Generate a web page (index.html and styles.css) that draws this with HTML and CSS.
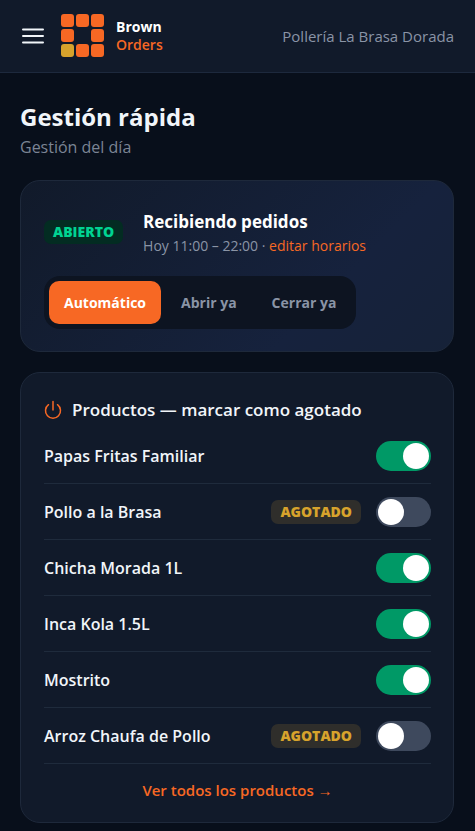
FILE: index.html
```html
<!DOCTYPE html>
<html lang="es">
<head>
<meta charset="utf-8">
<meta name="viewport" content="width=device-width, initial-scale=1">
<title>Gestión rápida</title>
<link rel="stylesheet" href="styles.css">
</head>
<body>
<header class="topbar">
  <button class="menu" type="button" aria-label="Menú">
    <svg width="22" height="16" viewBox="0 0 22 16" fill="none" stroke="currentColor" stroke-width="2" stroke-linecap="round"><path d="M1 1.5h20M1 8h20M1 14.5h20"/></svg>
  </button>
  <a class="brand" href="#">
    <svg width="43" height="43" viewBox="0 0 43 43" fill="#f76824" aria-hidden="true">
      <rect width="13" height="13" rx="3"/><rect x="15" width="13" height="13" rx="3"/><rect x="30" width="13" height="13" rx="3"/>
      <rect y="15" width="13" height="13" rx="3"/><rect x="30" y="15" width="13" height="13" rx="3"/>
      <rect y="30" width="13" height="13" rx="3" fill="#d7a32c"/><rect x="15" y="30" width="13" height="13" rx="3"/><rect x="30" y="30" width="13" height="13" rx="3"/>
    </svg>
    <span class="brand-name"><strong>Brown</strong><span class="brand-sub">Orders</span></span>
  </a>
  <span class="store">Pollería La Brasa Dorada</span>
</header>
<main class="page">
  <h1 class="title">Gestión rápida</h1>
  <p class="subtitle">Gestión del día</p>

  <section class="card status">
    <div class="status-head">
      <span class="badge badge-open">ABIERTO</span>
      <div class="status-text">
        <h2 class="status-title">Recibiendo pedidos</h2>
        <p class="hours">Hoy 11:00 – 22:00 · <a href="#">editar horarios</a></p>
      </div>
    </div>
    <div class="segmented" role="group" aria-label="Modo de apertura">
      <button class="segment active" type="button" aria-pressed="true">Automático</button>
      <button class="segment" type="button" aria-pressed="false">Abrir ya</button>
      <button class="segment" type="button" aria-pressed="false">Cerrar ya</button>
    </div>
  </section>

  <section class="card products">
    <h2 class="products-title">
      <svg width="18" height="20" viewBox="0 0 18 20" fill="none" stroke="currentColor" stroke-width="1.5" stroke-linecap="round" aria-hidden="true"><path d="M9 1.5v8.500M4.500 4.700a7.500 7.500 0 1 0 9 0"/></svg>
      Productos — marcar como agotado
    </h2>
    <ul class="list">
      <li class="row"><label for="p1">Papas Fritas Familiar</label><input class="toggle" type="checkbox" role="switch" id="p1" checked></li>
      <li class="row"><label for="p2">Pollo a la Brasa</label><span class="badge badge-out">AGOTADO</span><input class="toggle" type="checkbox" role="switch" id="p2"></li>
      <li class="row"><label for="p3">Chicha Morada 1L</label><input class="toggle" type="checkbox" role="switch" id="p3" checked></li>
      <li class="row"><label for="p4">Inca Kola 1.5L</label><input class="toggle" type="checkbox" role="switch" id="p4" checked></li>
      <li class="row"><label for="p5">Mostrito</label><input class="toggle" type="checkbox" role="switch" id="p5" checked></li>
      <li class="row"><label for="p6">Arroz Chaufa de Pollo</label><span class="badge badge-out">AGOTADO</span><input class="toggle" type="checkbox" role="switch" id="p6"></li>
    </ul>
    <a class="all" href="#">Ver todos los productos →</a>
  </section>
</main>
</body>
</html>
```
FILE: styles.css
```css
* { box-sizing: border-box; }
body {
  margin: 0;
  background: #080f1b;
  color: #f1f5f9;
  font-family: "Open Sans", "Noto Sans", sans-serif;
  font-size: 15px;
  line-height: 24px;
}
h1, h2, p, ul { margin: 0; padding: 0; }
a { color: #f76824; text-decoration: none; }
button { font: inherit; border: 0; background: none; cursor: pointer; }

.topbar {
  display: flex;
  align-items: center;
  padding: 14px 21px 15px;
  background: #111a2a;
  border-bottom: 1px solid #1d293d;
}
.menu { display: flex; padding: 0; margin: 0 17px 0 1px; color: #f1f5f9; }
.brand { display: flex; align-items: center; gap: 12px; }
.brand-name { display: flex; flex-direction: column; font-size: 14px; line-height: 18px; }
.brand-name strong { color: #fff; }
.brand-sub { font-weight: 600; }
.store { margin-left: auto; font-size: 15px; color: #8a94a6; }

.page { padding: 28px 21px 8px 20px; }
.title { font-size: 24px; line-height: 32px; }
.subtitle { font-size: 16px; line-height: 28px; margin-bottom: 19px; color: #7b8494; }

.card {
  border: 1px solid #1e293b;
  border-radius: 20px;
  padding: 24px 22px 22px 23px;
  background: #111a2a;
}
.status { margin-bottom: 20px; background: linear-gradient(135deg, #111a2a 0%, #16223d 70%, #162238 100%); }
.status-head { display: flex; align-items: center; gap: 20px; margin-bottom: 18px; }
.status-text { padding-top: 5px; }
.status-title { font-size: 17px; line-height: 24px; color: #fff; }
.hours { font-size: 14px; line-height: 24px; color: #8a94a6; }

.badge { flex: none; padding: 0 9px; border-radius: 7px; font-size: 14px; line-height: 24px; font-weight: 800; }
.badge-open { background: #032c22; color: #00d492; }
.badge-out { background: #2f2e2b; color: #d7a32c; }

.segmented { display: inline-flex; gap: 5px; padding: 5px; border-radius: 16px; background: #0d1421; vertical-align: top; }
.segment { padding: 0 15px; border-radius: 10px; font-size: 14px; line-height: 43px; font-weight: 700; color: #8a94a6; }
.segment.active { background: #f76824; color: #fff; }

.products { padding-bottom: 20px; }
.products-title { display: flex; align-items: center; gap: 10px; font-size: 17px; line-height: 26px; font-weight: 600; margin-bottom: 5px; }
.products-title svg { color: #f76824; }
.list { list-style: none; }
.row { display: flex; align-items: center; gap: 15px; height: 56px; border-bottom: 1px solid #1f2b3c; }
.row label { flex: 1; font-size: 16px; font-weight: 600; }
.toggle {
  appearance: none;
  flex: none;
  display: flex;
  width: 55px;
  height: 30px;
  margin: 0;
  padding: 2px;
  border-radius: 15px;
  background: #3e495d;
  cursor: pointer;
}
.toggle::before { content: ""; width: 26px; height: 26px; border-radius: 50%; background: #fff; }
.toggle:checked { background: #009966; justify-content: flex-end; }
.all { display: block; padding-top: 14px; text-align: center; font-size: 15px; font-weight: 600; }
```
